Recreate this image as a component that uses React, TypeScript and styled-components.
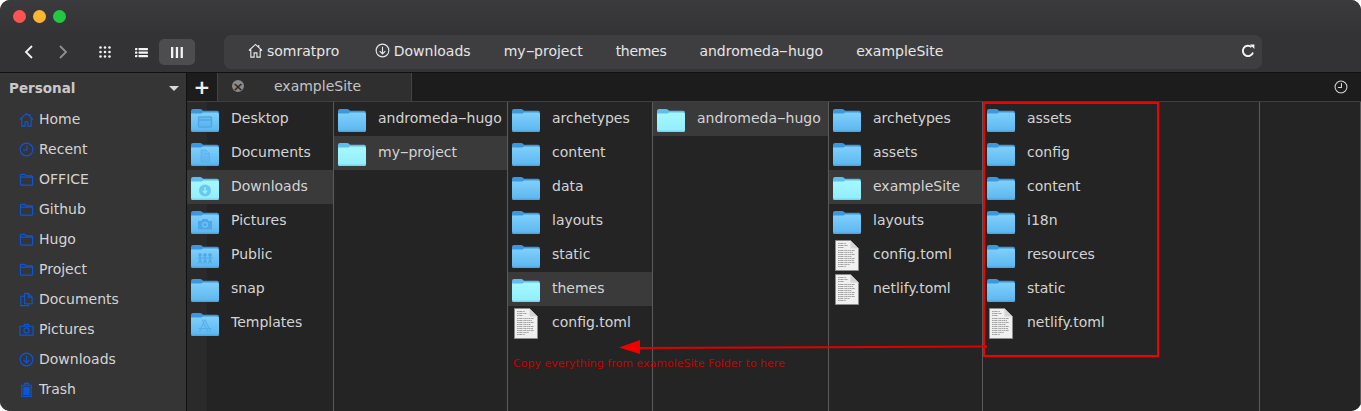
import * as React from 'react';
import styled, { createGlobalStyle } from 'styled-components';

const GlobalStyle = createGlobalStyle`
  html, body { margin: 0; padding: 0; background: #fff; }
  body { font-family: "DejaVu Sans", "Liberation Sans", sans-serif; font-size: 14px; }
`;

type Glyph = 'none' | 'desktop' | 'doc' | 'download' | 'camera' | 'people' | 'app';

interface Entry { name: string; glyph?: Glyph; file?: boolean; selected?: boolean }
interface ColumnData { width: number; entries: Entry[] }

const columns: ColumnData[] = [
  {
    width: 146,
    entries: [
      { name: 'Desktop', glyph: 'desktop' },
      { name: 'Documents', glyph: 'doc' },
      { name: 'Downloads', glyph: 'download', selected: true },
      { name: 'Pictures', glyph: 'camera' },
      { name: 'Public', glyph: 'people' },
      { name: 'snap' },
      { name: 'Templates', glyph: 'app' },
    ],
  },
  { width: 174, entries: [{ name: 'andromeda-hugo' }, { name: 'my-project', selected: true }] },
  {
    width: 145,
    entries: [
      { name: 'archetypes' },
      { name: 'content' },
      { name: 'data' },
      { name: 'layouts' },
      { name: 'static' },
      { name: 'themes', selected: true },
      { name: 'config.toml', file: true },
    ],
  },
  { width: 176, entries: [{ name: 'andromeda-hugo', selected: true }] },
  {
    width: 154,
    entries: [
      { name: 'archetypes' },
      { name: 'assets' },
      { name: 'exampleSite', selected: true },
      { name: 'layouts' },
      { name: 'config.toml', file: true },
      { name: 'netlify.toml', file: true },
    ],
  },
  {
    width: 277,
    entries: [
      { name: 'assets' },
      { name: 'config' },
      { name: 'content' },
      { name: 'i18n' },
      { name: 'resources' },
      { name: 'static' },
      { name: 'netlify.toml', file: true },
    ],
  },
  { width: 101, entries: [] },
];

// the reference font draws a much wider hyphen than DejaVu does
const Name: React.FC<{ text: string }> = ({ text }) => {
  const parts = text.split('-');
  return (
    <span>
      {parts.map((part, i) => (
        <React.Fragment key={i}>
          {i > 0 && <Hyphen>-</Hyphen>}
          {part}
        </React.Fragment>
      ))}
    </span>
  );
};

const FolderGlyph: React.FC<{ glyph: Glyph; color: string }> = ({ glyph, color }) => {
  switch (glyph) {
    case 'desktop':
      return (
        <g fill="none" stroke={color} strokeWidth="1.4">
          <rect x="7.500" y="9" width="13" height="10" rx="1" fill={color} fillOpacity=".35" />
          <path d="M7.500 12h13" />
        </g>
      );
    case 'doc':
      return <path d="M10 8h5l3.500 3.500V20H10z M15 8v3.500h3.500" fill={color} fillOpacity=".3" stroke={color} strokeOpacity=".5" />;
    case 'download':
      return (
        <g>
          <circle cx="14" cy="14.500" r="6" fill={color} />
          <path d="M14 11v6M11.800 14.800l2.200 2.200 2.200-2.200" stroke="#9cf3ff" strokeWidth="1.3" fill="none" />
        </g>
      );
    case 'camera':
      return (
        <g>
          <path d="M7 11h3.500l1-2h5l1 2H21v8.500H7z" fill={color} />
          <circle cx="14" cy="14.800" r="3" fill="#70c6f6" />
          <circle cx="14" cy="14.800" r="1.800" fill={color} />
        </g>
      );
    case 'people':
      return (
        <g stroke={color} strokeWidth="1.2" fill={color}>
          <circle cx="9" cy="11" r="1.200" />
          <circle cx="14" cy="11" r="1.200" />
          <circle cx="19" cy="11" r="1.200" />
          <path d="M9 12.500v3l-1.500 4M9 15.500l1.500 4M14 12.500v3l-1.500 4M14 15.500l1.500 4M19 12.500v3l-1.500 4M19 15.500l1.500 4M6.500 14h15" fill="none" />
        </g>
      );
    case 'app':
      return <path d="M14 7.500 8.500 20M14 7.500 19.500 20M7.500 16.500h13M11 7.500l6 12.500" stroke={color} strokeOpacity=".75" strokeWidth="1.1" fill="none" />;
    default:
      return null;
  }
};

const FolderIcon: React.FC<{ glyph: Glyph; selected?: boolean }> = ({ glyph, selected }) => {
  const id = selected ? 'folderOpen' : 'folderPlain';
  return (
    <FolderSvg width="28" height="24" viewBox="0 0 28 24">
      <defs>
        <linearGradient id={id} x1="0" y1="0" x2="0" y2="1">
          <stop offset="0" stopColor={selected ? '#a6f7ff' : '#80d0fa'} />
          <stop offset="1" stopColor={selected ? '#90eefc' : '#5ab6f0'} />
        </linearGradient>
      </defs>
      <path d="M0 3a2 2 0 0 1 2-2h7c1.500 0 2 .8 3 1.800h14a2 2 0 0 1 2 2V8H0z" fill={selected ? '#5fbdf2' : '#3b98de'} />
      <path d="M0 5.500h10.500L12 4.500h14a2 2 0 0 1 2 2V22a2 2 0 0 1-2 2H2a2 2 0 0 1-2-2z" fill={`url(#${id})`} />
      <path d="M0 22.500a1.800 1.800 0 0 0 2 1.500h24a1.800 1.800 0 0 0 2-1.500z" fill={selected ? '#78d6f4' : '#4fa5e0'} />
      <FolderGlyph glyph={glyph} color={selected ? '#68c8ee' : '#4fa8e6'} />
    </FolderSvg>
  );
};

const FileIcon: React.FC = () => (
  <svg width="24" height="31" viewBox="0 0 24 31">
    <path d="M.5.500h15l8 8v22H.5z" fill="#f0f0f0" stroke="#8d8d8d" />
    <path d="M15.500.500v8h8z" fill="#d4d4d4" />
    <path
      d="M3 3.500h8M3 5.500h10M3 7.500h6M3 10.500h17M3 12.500h15M3 14.500h17M3 16.500h14M3 18.500h17M3 20.500h16M3 22.500h17M3 24.500h12M3 26.500h8"
      stroke="#8e8e8e"
      strokeWidth=".8"
      strokeDasharray="1.700 .5 3 .5 1 .5 2.300 .5 .9 .5"
      fill="none"
    />
  </svg>
);

const blue = '#0b57dc';

const SideIcon: React.FC<{ kind: string; color?: string; size?: number }> = ({ kind, color = blue, size = 15 }) => {
  const body = () => {
    switch (kind) {
      case 'home':
        return <path d="M1 8 8 1.500 15 8M3 7v8h3.500v-4.500h3V15H13V7M11.500 2v3" />;
      case 'clock':
        return (
          <>
            <circle cx="8" cy="8" r="6.800" />
            <path d="M8.500 3.500V8.500H4.500" />
          </>
        );
      case 'folder':
        return <path d="M1.500 3.500a1 1 0 0 1 1-1h3.500l1.500 1.500h6a1 1 0 0 1 1 1v8a1 1 0 0 1-1 1h-11a1 1 0 0 1-1-1zM1.500 5.500h13" />;
      case 'docs':
        return <path d="M6 1.500h4l4 4v7H6zM10 1.500v4h4M6 4.500H2v10h8v-2" />;
      case 'camera':
        return (
          <>
            <path d="M1 4.500h14v9.500H1zM5 4.500 6 2.500h4l1 2" />
            <circle cx="8" cy="9" r="2.700" />
          </>
        );
      case 'download':
        return (
          <>
            <circle cx="8" cy="8" r="6.800" />
            <path d="M8 4v7.500M5 8.700l3 3 3-3" />
          </>
        );
      case 'trash':
        return (
          <>
            <path d="M3 3.500h10v12H3zM6 3.500v-2h4v2" />
            <rect x="4.500" y="5" width="7" height="9" fill={color} stroke="none" />
          </>
        );
      default:
        return null;
    }
  };
  return (
    <svg width={size} height={size} viewBox="0 0 16 16" fill="none" stroke={color} strokeWidth="1.200">
      {body()}
    </svg>
  );
};

const ToolIcon: React.FC<{ kind: string; dim?: boolean }> = ({ kind, dim }) => {
  const c = dim ? '#8f8f8f' : '#f2f2f2';
  if (kind === 'back' || kind === 'forward') {
    return (
      <svg width="10" height="14" viewBox="0 0 10 14" fill="none" stroke={c} strokeWidth="1.800">
        <path d={kind === 'back' ? 'M8 1 2 7l6 6' : 'M2 1l6 6-6 6'} />
      </svg>
    );
  }
  if (kind === 'grid') {
    return (
      <svg width="12" height="12" viewBox="0 0 12 12" fill={c}>
        {[1.500, 6, 10.500].flatMap((y) => [1.500, 6, 10.500].map((x) => <circle key={`${x}-${y}`} cx={x} cy={y} r="1.300" />))}
      </svg>
    );
  }
  if (kind === 'list') {
    return (
      <svg width="13" height="11" viewBox="0 0 13 11" fill={c}>
        {[1, 4.500, 8].map((y) => (
          <React.Fragment key={y}>
            <rect x="0" y={y} width="2.400" height="2.200" rx=".6" />
            <rect x="3.500" y={y} width="9.500" height="2.200" rx=".6" />
          </React.Fragment>
        ))}
      </svg>
    );
  }
  return (
    <svg width="12" height="11" viewBox="0 0 12 11" fill={c}>
      <rect x="0" width="2.300" height="11" />
      <rect x="4.800" width="2.300" height="11" />
      <rect x="9.600" width="2.300" height="11" />
    </svg>
  );
};

const sidebarItems = [
  ['home', 'Home'],
  ['clock', 'Recent'],
  ['folder', 'OFFICE'],
  ['folder', 'Github'],
  ['folder', 'Hugo'],
  ['folder', 'Project'],
  ['docs', 'Documents'],
  ['camera', 'Pictures'],
  ['download', 'Downloads'],
  ['trash', 'Trash'],
];

const crumbs = ['my-project', 'themes', 'andromeda-hugo', 'exampleSite'];

const App: React.FC = () => (
  <Window>
    <GlobalStyle />
    <TitleBar>
      <Light color="#ff5252" />
      <Light color="#ffb52e" />
      <Light color="#22c83f" />
    </TitleBar>
    <Toolbar>
      <NavButton><ToolIcon kind="back" /></NavButton>
      <NavButton><ToolIcon kind="forward" dim /></NavButton>
      <ViewButton><ToolIcon kind="grid" /></ViewButton>
      <ViewButton><ToolIcon kind="list" /></ViewButton>
      <ViewButton active><ToolIcon kind="columns" /></ViewButton>
      <AddressBar>
        <Crumb>
          <SideIcon kind="home" color="#e8e8e8" />
          somratpro
        </Crumb>
        <Crumb lead>
          <SideIcon kind="download" color="#e8e8e8" />
          Downloads
        </Crumb>
        {crumbs.map((crumb) => (
          <Crumb key={crumb} tight={crumb === 'themes'}><Name text={crumb} /></Crumb>
        ))}
        <Reload>
          <svg width="14" height="14" viewBox="0 0 14 14" fill="none" stroke="#f4f4f4" strokeWidth="1.900">
            <path d="M12 8.500A5.200 5.200 0 1 1 10.500 3" />
            <path d="M9 .6h4.400V5z" fill="#f4f4f4" stroke="none" />
          </svg>
        </Reload>
      </AddressBar>
    </Toolbar>
    <Body>
      <Sidebar>
        <SidebarHeader>
          Personal
          <Caret />
        </SidebarHeader>
        {sidebarItems.map(([kind, label]) => (
          <SidebarItem key={label}>
            <SideIcon kind={kind} />
            {label}
          </SidebarItem>
        ))}
      </Sidebar>
      <Main>
        <TabBar>
          <NewTab>+</NewTab>
          <Tab>
            <TabClose>×</TabClose>
            exampleSite
          </Tab>
          <TabSpacer />
          <SideIcon kind="clock" color="#d8d8d8" size={14} />
        </TabBar>
        <Columns>
          {columns.map((column, i) => (
            <Column key={i} width={column.width} strip={i === 0}>
              {column.entries.map((entry) => (
                <Row key={entry.name} selected={entry.selected}>
                  <IconSlot>
                    {entry.file ? <FileIcon /> : <FolderIcon glyph={entry.glyph ?? 'none'} selected={entry.selected} />}
                  </IconSlot>
                  <RowLabel><Name text={entry.name} /></RowLabel>
                </Row>
              ))}
            </Column>
          ))}
          <RedBox />
          <Arrow width="370" height="14" viewBox="0 0 370 14">
            <path d="M368 6.500 20 8" stroke="#e00000" strokeWidth="2" fill="none" />
            <path d="M0 7.500 21 0v14z" fill="#f00000" />
          </Arrow>
          <Note>Copy everything from examoleSite Folder to here</Note>
        </Columns>
      </Main>
    </Body>
  </Window>
);

const Hyphen = styled.span`
  display: inline-block;
  width: 8.500px;
  text-align: center;
  transform: scaleX(1.9);
`;

const FolderSvg = styled.svg`
  margin-top: 2px;
`;

const Window = styled.div`
  width: 1361px;
  height: 411px;
  display: flex;
  flex-direction: column;
  overflow: hidden;
  border-radius: 10px;
  background: #222;
  color: #d6d6d6;
`;

const TitleBar = styled.div`
  height: 32px;
  padding-left: 13px;
  display: flex;
  align-items: center;
  gap: 7px;
  background: linear-gradient(#3b3b3d, #343436);
  box-sizing: border-box;
`;

const Light = styled.span<{ color: string }>`
  width: 13px;
  height: 13px;
  border-radius: 50%;
  background: ${(p) => p.color};
`;

const Toolbar = styled.div`
  height: 41px;
  box-sizing: border-box;
  display: flex;
  align-items: center;
  padding-left: 12px;
  background: #333335;
  border-bottom: 1px solid #111;
`;

const NavButton = styled.div`
  width: 34px;
  height: 26px;
  display: flex;
  align-items: center;
  justify-content: center;
`;

const ViewButton = styled.div<{ active?: boolean }>`
  width: 36px;
  height: 26px;
  display: flex;
  align-items: center;
  justify-content: center;
  border-radius: 5px;
  background: ${(p) => (p.active ? '#4d4d4f' : 'transparent')};
  &:nth-child(3) {
    margin-left: 7px;
  }
`;

const AddressBar = styled.div`
  width: 1038px;
  height: 34px;
  margin: 0 0 1px 29px;
  padding: 0 0 2px 24px;
  box-sizing: border-box;
  display: flex;
  align-items: center;
  gap: 33px;
  border-radius: 7px;
  background: #3e3e40;
  color: #e6e6e6;
`;

const Crumb = styled.span<{ lead?: boolean; tight?: boolean }>`
  display: flex;
  align-items: center;
  gap: 4px;
  margin-left: ${(p) => (p.lead ? '2.500px' : '0')};
  letter-spacing: ${(p) => (p.tight ? '-0.3px' : 'normal')};
`;

const Reload = styled.span`
  display: flex;
  margin-left: auto;
  margin-right: 7px;
`;

const Body = styled.div`
  flex: 1;
  display: flex;
  min-height: 0;
`;

const Sidebar = styled.div`
  width: 186px;
  flex: none;
  background: #353536;
  border-right: 1px solid #111;
`;

const SidebarHeader = styled.div`
  height: 31px;
  padding: 0 7px 1px 9px;
  box-sizing: border-box;
  display: flex;
  align-items: center;
  justify-content: space-between;
  font-weight: 700;
  font-size: 13.500px;
  color: #c9c9c9;
`;

const Caret = styled.span`
  width: 0;
  height: 0;
  border-left: 5px solid transparent;
  border-right: 5px solid transparent;
  border-top: 5px solid #d8d8d8;
`;

const SidebarItem = styled.div`
  height: 30px;
  padding-left: 19px;
  display: flex;
  align-items: center;
  gap: 5px;
  color: #d4d4d4;
`;

const Main = styled.div`
  flex: 1;
  display: flex;
  flex-direction: column;
  min-width: 0;
`;

const TabBar = styled.div`
  height: 29px;
  box-sizing: border-box;
  display: flex;
  align-items: center;
  padding-right: 13px;
  background: #1c1c1c;
  border-bottom: 1px solid #3f3f3f;
`;

const NewTab = styled.div`
  width: 30px;
  height: 28px;
  display: flex;
  align-items: center;
  justify-content: center;
  color: #f0f0f0;
  font-size: 20px;
  font-weight: 700;
`;

const Tab = styled.div`
  width: 195px;
  height: 28px;
  padding: 0 0 2px 14px;
  box-sizing: border-box;
  display: flex;
  align-items: center;
  gap: 30px;
  background: #2f2f30;
  border-left: 1px solid #444;
  border-right: 1px solid #444;
  color: #c4c4c4;
`;

const TabClose = styled.span`
  width: 12px;
  height: 12px;
  display: flex;
  align-items: center;
  justify-content: center;
  border-radius: 50%;
  background: #8a8a8a;
  color: #2b2b2b;
  font-size: 13px;
  font-weight: 700;
  line-height: 1;
`;

const TabSpacer = styled.div`
  flex: 1;
`;

const Columns = styled.div`
  position: relative;
  flex: 1;
  display: flex;
  min-height: 0;
  background: #242424;
`;

const Column = styled.div<{ width: number; strip?: boolean }>`
  width: ${(p) => (p.strip ? p.width + 1 : p.width)}px;
  flex: none;
  box-sizing: border-box;
  border-right: 1px solid #5a5a5a;
  background: ${(p) => (p.strip ? 'linear-gradient(90deg, #2a2a2a 20px, #242424 20px)' : 'transparent')};
`;

const Row = styled.div<{ selected?: boolean }>`
  height: 34px;
  padding-left: 4px;
  display: flex;
  align-items: center;
  gap: 12px;
  white-space: nowrap;
  color: #d4d4d4;
  background: ${(p) => (p.selected ? '#3a3a3a' : 'transparent')};
`;

const RowLabel = styled.span`
  padding-bottom: 2px;
`;

const IconSlot = styled.span`
  width: 28px;
  display: flex;
  justify-content: center;
  flex: none;
`;

const RedBox = styled.div`
  position: absolute;
  left: 796px;
  top: 0;
  width: 176px;
  height: 255px;
  border: 2px solid #f00000;
  box-sizing: border-box;
`;

const Arrow = styled.svg`
  position: absolute;
  left: 432px;
  top: 238px;
`;

const Note = styled.div`
  position: absolute;
  left: 326px;
  top: 255px;
  font-size: 11px;
  color: #c80000;
  white-space: nowrap;
`;

export default App;
